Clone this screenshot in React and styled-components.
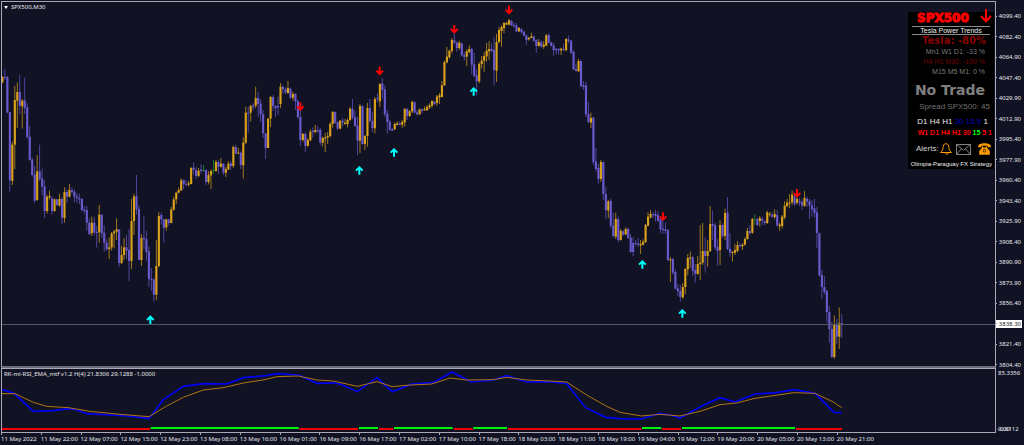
import React from "react";
import styled, { createGlobalStyle } from "styled-components";

const GlobalStyle = createGlobalStyle`
  * { box-sizing: border-box; }
  body { margin: 0; background: #111324; }
`;

const colors = {
  bg: "#111324",
  frame: "#a9a8b4",
  text: "#e6e6ea",
  up: "#daa11b",
  down: "#6a5acd",
  flat: "#1f9a2e",
};

/* Candles: kind (u/d/g), high, body top, body bottom, low; heights are thirds of a pixel from base. */
const SESSIONS = [
  {
    base: 0,
    rows: `u 228 231 247 250,d 207 231 234 240,d 228 231 337 340,d 335 336 541 575,u 425 434 543 555,u 258 300 434 507,
u 247 276 302 384,d 225 276 318 342,u 297 302 319 386,d 233 302 324 342,d 310 322 411 416,d 378 410 480 482,
d 472 479 525 530,d 498 524 602 609,u 465 514 600 603,d 434 514 537 543,d 506 535 560 585,d 540 559 633 654,
u 585 590 633 641,u 572 588 592 598,d 590 595 633 644,u 596 598 633 636,d 596 598 615 618,u 581 597 617 620,
d 590 597 653 672,u 562 576 654 668,d 566 576 590 609,u 552 570 590 592,d 561 571 576 581,d 568 575 590 606,
d 580 590 594 609,d 581 594 598 612,d 594 597 630 634,d 618 629 633 641,d 618 630 668 692`,
  },
  {
    base: 540,
    rows: `d 115 128 162 165,u 110 128 160 168,d 110 128 157 166,d 138 156 159 203,u 75 104 157 188,d 103 104 160 174,
d 137 158 188 215,d 177 188 208 213,u 172 202 207 237,u 156 160 202 212,u 150 154 160 205,u 115 148 155 180,
d 147 148 249 260,u 198 225 249 252,u 174 202 225 240,d 165 202 212 237,d 147 210 243 303,u 56 123 243 267,
u 41 49 123 165,d -15 49 88 104,d 75 87 240 241,u 162 174 240 258,d 107 173 178 207,d 153 177 216 242,
d 199 214 297 321,d 264 297 300 333,d 294 299 344 365,u 180 258 344 360,u 96 108 258 262,d 98 105 118 134,
d 117 118 144 187,u 117 118 142 152,d 116 119 129 137,u 80 88 129 130,u 50 58 89 92,u 35 38 58 73,u 22 30 38 40`,
  },
  {
    base: 0,
    rows: `u 534 541 571 573,d 538 541 552 568,d 540 552 555 557,u 543 550 554 559,u 501 504 552 553,d 487 503 510 524,
d 501 510 528 537,u 504 512 528 531,d 493 509 513 521,g 495 510 513 516,d 508 510 546 555,u 514 525 546 553,
u 508 513 526 567,g 480 510 513 522,u 480 486 513 516,d 481 486 500 522,u 474 491 500 503,d 489 491 518 525,
u 500 507 518 531,u 484 491 508 510,d 484 490 498 510,u 436 441 498 504,d 434 441 460 463,u 444 458 461 462,
d 454 458 495 507,u 412 428 496 536,u 320 338 428 432`,
  },
  {
    base: 180,
    rows: `d 140 158 161 218,u 134 138 158 185,d 130 136 140 150,u 80 114 137 144,d 96 114 132 172,d 117 131 163 186,
d 150 163 220 234,d 219 220 264 297,u 174 176 264 265,u 108 111 176 201,d 105 111 138 152,d 136 138 144 171,
d 110 138 142 165,u 69 80 132 144,d 75 81 88 102,d 82 88 97 102,u 63 84 99 102,d 83 86 113 117,u 95 102 113 122,
d 99 102 124 150,d 119 124 172 175,d 130 171 240 258,u 219 222 240 245,d 216 222 258 276,u 234 240 258 260,
u 208 215 241 244,d 202 212 216 233,u 195 210 216 220,d 198 210 214 219,d 204 210 248 256,u 230 234 248 260,
u 219 232 236 276,u 216 228 232 252,u 186 192 228 234,u 153 156 192 203,d 154 156 188 192,d 184 187 206 210,
u 180 182 206 208,d 174 182 188 200,u 177 188 192 194,u 175 180 192 202,u 141 146 180 183,d 117 147 173 178,
d 152 172 198 200,d 170 197 242 285,u 132 138 242 279,d 136 138 252 254,u 225 228 252 270,u 129 144 228 260,
d 117 144 183 188,d 156 183 204 216,u 111 117 205 220,d 101 114 117 127,u 69 72 124 141,d 54 70 90 116,
d 77 88 162 171,d 150 161 186 220,d 180 185 209 213,d 204 207 212 213,u 187 192 208 210,u 184 190 195 196,
d 184 190 194 195,u 180 186 194 203,u 144 147 187 200,d 144 147 168 180,u 150 154 168 171,u 122 126 154 160,
d 123 127 158 160,d 150 157 163 167,u 146 148 163 165,d 144 149 153 160,u 139 147 151 152,u 135 141 151 152,
u 130 136 142 147,u 120 123 137 143,d 123 125 132 135,u 105 110 129 137,u 99 106 112 132,u 63 76 111 112`,
  },
  {
    base: 0,
    rows: `u 182 186 256 258,u 141 170 187 190,u 149 152 172 176,u 114 120 153 160,d 95 121 128 132,d 123 128 144 155,
u 122 128 144 150,d 128 130 166 169,d 156 165 171 182,u 148 154 170 198,u 136 147 156 160,d 143 147 194 222,
d 158 193 228 231,d 208 226 244 287,u 186 192 244 250,u 168 182 192 206,u 157 168 182 216,u 129 152 169 185,
u 123 147 154 180,d 130 147 153 157,d 110 150 210 254,u 102 126 212 246,u 81 90 126 130,u 76 81 93 140,
u 66 69 84 100,u 66 69 74 75,u 57 61 74 76,d 60 63 76 78,d 68 75 79 82,d 69 77 94 96,u 81 84 94 96,
d 84 88 97 100,d 93 95 107 108,d 102 107 120 135,u 110 114 118 122,u 98 109 114 115,d 106 110 122 126,
d 118 120 138 158,u 117 126 138 140,d 121 127 140 144,u 123 134 140 147,u 102 106 137 138,d 100 105 128 130,
d 124 128 137 140,d 128 137 150 167,d 144 147 151 162,d 144 147 151 164,u 143 146 151 165,d 131 147 151 153,
u 114 117 150 155,d 107 118 123 130,d 120 122 158 162,d 150 156 208 210,d 190 207 213 215,u 177 183 214 216,
d 181 183 258 262,d 243 256 261 270,d 245 256 343 351,d 306 342 366 370,u 338 354 368 384,d 350 353 486 495,
d 444 484 507 515,d 492 504 537 551,u 480 486 537 546`,
  },
  {
    base: 450,
    rows: `d 34 36 132 150,d 111 132 180 208,u 150 154 182 204,d 147 153 227 234,d 189 226 258 262,u 188 207 260 267,
d 200 207 270 278,u 237 243 270 272,d 240 244 254 258,u 232 237 253 256,d 232 237 264 266,d 252 263 306 309,
d 261 279 306 318,d 270 279 282 288,d 264 280 284 292,u 270 282 286 312,u 268 275 284 286,u 222 225 276 279,
u 186 200 227 229,u 180 192 202 206,d 186 192 195 204,d 180 192 198 214,d 183 196 212 216,d 200 208 238 249,
d 190 236 240 252,d 218 238 243 252,d 237 241 330 333,u 321 328 331 396,d 324 327 368 374,d 357 366 416 418,
d 402 415 424 438,d 405 423 441 455,u 399 411 442 446,u 354 357 411 432,u 312 324 358 376,u 304 322 326 354,
d 318 322 362 378,d 342 360 372 398,u 318 342 372 374,u 225 338 342 390,u 219 303 338 345,d 262 303 318 368,
u 270 303 318 350,u 168 222 303 306,d 182 222 228 270,d 219 226 292 300,d 267 291 303 348,u 210 225 300 345,
d 220 225 258 264,u 176 189 258 270,d 141 188 297 300,d 249 297 308 320,u 303 306 309 335,u 282 300 308 315,
u 273 285 303 307,d 278 285 289 292,u 280 284 289 300,u 262 267 284 287,u 234 243 267 269,d 225 243 249 254,
u 204 207 248 252,g 192 207 209 225,d 203 208 225 228,u 198 204 213 230,d 200 207 212 225,d 210 214 219 225,
u 183 187 219 222,u 186 191 194 200,d 186 194 200 204,u 178 192 201 207,d 180 195 226 230,u 218 224 229 243,
u 195 200 228 236,u 154 167 202 208,u 147 158 168 172,u 132 157 160 175,u 121 134 157 165,d 132 140 162 168,
u 140 147 158 164,d 144 154 158 168,d 148 156 166 180,u 123 144 168 170,d 140 146 155 171,d 147 154 166 207,
d 150 166 178 200,d 147 175 189 202,d 171 187 249 294,d 248 250 376 380,d 360 375 411 448,d 377 411 426 434,
d 418 423 486 518,d 468 486 537 578,d 516 537 621 624,u 496 522 621 626,d 507 522 560 582,u 472 520 560 597,
d 492 519 523 564`,
  },
];

const CANDLES = SESSIONS.flatMap(({ base, rows }) =>
  rows.split(",").map((row) => {
    const [kind, ...values] = row.trim().split(" ");
    const [high, top, bottom, low] = values.map((v) => Number(v) + base);
    return { kind, high, top, bottom, low };
  })
);
const CANDLE_STEP = 7.45;
const KIND_COLOR = { u: colors.up, d: colors.down, g: colors.flat };

const SELLS = [[901, 320], [1139, 213], [1363, 88], [1527, 30], [1989, 650], [2391, 580]];
const BUYS = [[451, 959], [1078, 511], [1182, 457], [1421, 274], [1927, 793], [2047, 940]];

const PRICES = [
  "4099.40", "4082.40", "4064.90", "4047.40", "4029.90", "4012.90", "3995.40", "3977.90", "3960.40",
  "3943.40", "3925.90", "3908.40", "3890.90", "3873.90", "3856.40", "3838.30", "3821.40", "3804.40",
];
const CURRENT = "3838.30";

const TIMES = [
  "11 May 2022", "11 May 22:00", "12 May 07:00", "12 May 15:00", "12 May 23:00", "13 May 08:00",
  "13 May 16:00", "16 May 01:00", "16 May 09:00", "16 May 17:00", "17 May 02:00", "17 May 10:00",
  "17 May 18:00", "18 May 03:00", "18 May 11:00", "18 May 19:00", "19 May 04:00", "19 May 12:00",
  "19 May 20:00", "20 May 05:00", "20 May 13:00", "20 May 21:00",
];

const RSI =
  "6,83 42,94 100,148 160,146 205,140 225,142 260,155 330,159 380,162 447,170 490,113 550,73 610,65 680,66 730,47 800,41 830,35 895,39 952,64 1000,63 1020,66 1072,89 1131,47 1177,89 1235,66 1300,62 1356,30 1414,60 1480,54 1520,41 1580,60 1650,59 1700,65 1757,137 1817,166 1860,170 1923,171 1980,154 2010,159 2040,168 2110,130 2160,107 2205,120 2265,96 2330,92 2382,83 2445,94 2502,151 2525,152";
const EMA =
  "6,95 45,95 100,121 140,133 205,137 270,148 360,157 447,164 500,132 550,106 610,84 670,77 730,63 795,53 830,44 895,42 952,54 1000,57 1072,73 1131,59 1177,74 1230,69 1295,66 1350,48 1400,54 1480,53 1520,46 1580,54 1650,57 1700,60 1760,99 1820,133 1860,151 1925,162 1980,157 2040,162 2100,148 2160,128 2210,123 2265,109 2382,92 2445,94 2500,120 2525,137";
const TREND_DOWN = [[6, 450], [898, 1074], [1137, 1180], [1362, 1418], [1524, 1924], [1986, 2043], [2388, 2526]];
const TREND_UP = [[452, 896], [1077, 1134], [1182, 1358], [1420, 1521], [1926, 1984], [2046, 2385]];

const Terminal = styled.main`
  display: grid;
  grid-template-columns: minmax(0, 1fr) 28px;
  grid-template-rows: minmax(0, 1fr) 77px;
  height: 100vh;
  min-height: 300px;
  background: ${colors.bg};
  color: ${colors.text};
  font: 6px/8px "Noto Sans", "Open Sans", sans-serif;
  white-space: nowrap;
  overflow: hidden;
`;

const PriceSection = styled.section`
  position: relative;
  margin: 1px 0 0 1px;
  border: 1px solid ${colors.frame};
  border-bottom: 2px solid #6d6c7a;
  min-height: 0;
`;

const LowerSection = styled.section`
  display: flex;
  flex-direction: column;
  margin-left: 1px;
  min-width: 0;
`;

const IndicatorPane = styled.div`
  position: relative;
  height: 65px;
  border: 1px solid ${colors.frame};
`;

const Plot = styled.svg`
  display: block;
  width: 100%;
  height: 100%;
`;

const PaneTitle = styled.h1`
  position: absolute;
  top: 1px;
  left: 2px;
  display: flex;
  align-items: center;
  gap: 3px;
  margin: 0;
  font: inherit;
`;

const Caret = styled.span`
  border: 2px solid transparent;
  border-top: 3px solid #fff;
  border-bottom: 0;
`;

const PriceAxis = styled.ol`
  display: flex;
  flex-direction: column;
  justify-content: space-between;
  margin: 0 0 -1px;
  padding: 12px 0 0;
  list-style: none;
`;

const PriceTick = styled.li`
  display: flex;
  align-items: center;
  width: 26px;
  padding-right: 1px;
  color: ${(p) => (p.$current ? "#222" : colors.text)};
  background: ${(p) => (p.$current ? "#fff" : "none")};
  &::before {
    content: "";
    width: 1px;
    height: 1px;
    margin-right: 2px;
    background: ${colors.frame};
  }
`;

const IndicatorAxis = styled.div`
  display: flex;
  flex-direction: column;
  justify-content: space-between;
  height: 65px;
  padding: 1px 0 0 2px;
`;

const AxisFloor = styled.div`
  display: grid;
  span { grid-area: 1 / 1; }
`;

const TimeAxis = styled.ol`
  display: flex;
  margin: 0;
  padding: 0;
  list-style: none;
`;

const TimeTick = styled.li`
  flex: 0 0 4%;
  &::before {
    content: "";
    display: block;
    width: 1px;
    height: 2px;
    background: ${colors.frame};
  }
`;

const InfoPanel = styled.aside`
  position: absolute;
  top: 10px;
  right: 1px;
  width: 86px;
  height: 157px;
  background: #000;
  font-family: "Liberation Sans", Arial, sans-serif;
`;

const InfoHeader = styled.header`
  display: flex;
  justify-content: space-between;
  align-items: center;
  height: 12px;
  padding: 0 2px 0 9px;
  color: #f00;
  font: bold 12px/12px "DejaVu Sans", sans-serif;
  -webkit-text-stroke: 1px #f00;
  svg { width: 12px; height: 14px; margin-top: -4px; }
`;

const InfoTitle = styled.h2`
  height: 9px;
  margin: 2px 4px 0;
  border: solid #8c8c8c;
  border-width: 1px 0;
  color: #eee;
  font-size: 7px;
  font-weight: normal;
  line-height: 7px;
  text-align: center;
`;

const InfoRow = styled.div`
  height: ${(p) => p.$height}px;
  margin-top: ${(p) => p.$gap || 0}px;
  padding-right: ${(p) => p.$end}px;
  color: ${(p) => p.$color};
  font-size: ${(p) => p.$size}px;
  font-weight: ${(p) => (p.$bold ? "bold" : "normal")};
  font-family: ${(p) => (p.$wide ? '"DejaVu Sans", sans-serif' : "inherit")};
  line-height: ${(p) => p.$height}px;
  text-align: right;
`;

const Tone = styled.span`
  color: ${(p) => p.$color};
`;

const Alerts = styled.div`
  display: grid;
  grid-template-columns: 24px 16px 22px 13px;
  align-items: center;
  height: 22px;
  padding-left: 8px;
  color: #d4d4d4;
  font-size: 8px;
`;

const AlertButton = styled.button`
  display: block;
  padding: 0;
  border: 0;
  background: none;
  svg { display: block; }
`;

function SignalArrow({ x, y, down }) {
  return (
    <path
      d="M0 13V-11M-10 1L0 -9L10 1"
      transform={`translate(${x} ${y})${down ? " scale(1 -1)" : ""}`}
      stroke={down ? "#ff0000" : "#00ffff"}
      strokeWidth="6"
      fill="none"
    />
  );
}

function PriceChart() {
  return (
    <Plot viewBox="6 6 2979 1092" preserveAspectRatio="none" role="img" aria-label="SPX500 candles">
      {CANDLES.map((c, i) => {
        const x = 7 + i * CANDLE_STEP;
        const fill = KIND_COLOR[c.kind];
        return (
          <g key={i} fill={fill}>
            <rect x={x - 1.3} y={c.high} width="2.8" height={c.low - c.high} opacity="0.75" />
            <rect x={x - 3} y={c.top} width="6.4" height={c.bottom - c.top} />
          </g>
        );
      })}
      <rect x="6" y="972" width="2979" height="3" fill="#4b5866" />
      {SELLS.map(([x, y]) => <SignalArrow key={x} x={x} y={y} down />)}
      {BUYS.map(([x, y]) => <SignalArrow key={x} x={x} y={y} />)}
    </Plot>
  );
}

function IndicatorChart() {
  return (
    <Plot viewBox="6 21 2979 189" preserveAspectRatio="none" role="img" aria-label="RSI and EMA">
      <polyline points={RSI} fill="none" stroke="#0000f5" strokeWidth="5" />
      <polyline points={EMA} fill="none" stroke="#b07516" strokeWidth="3" />
      {TREND_DOWN.map(([a, b]) => <rect key={a} x={a} y="198" width={b - a} height="6" fill="#f00000" />)}
      {TREND_UP.map(([a, b]) => <rect key={a} x={a} y="195" width={b - a} height="6" fill="#00f010" />)}
    </Plot>
  );
}

function BellIcon() {
  return (
    <svg width="12" height="12" viewBox="0 0 12 12" fill="none" stroke="#ff9a00">
      <path d="M6 .7C3.6 .8 3.2 2.6 3.1 4.6C3 6.8 2.2 7.8 .5 9.5H11.5C9.8 7.8 9 6.8 8.9 4.6C8.8 2.6 8.4 .8 6 .7Z" />
      <path d="M5.4 9.8C5.5 11.8 8.2 11.8 8.4 9.8" />
    </svg>
  );
}

function MailIcon() {
  return (
    <svg width="15" height="11" viewBox="0 0 15 11" fill="none" stroke="#8f8f8f" strokeWidth=".9">
      <path d="M.5 .5H14.5V10.5H.5ZM.5 .5L7.5 6.3L14.5 .5M.5 10.5L5.4 4.8M14.5 10.5L9.6 4.8" />
    </svg>
  );
}

function PhoneIcon() {
  return (
    <svg width="13" height="12" viewBox="0 0 13 12" fill="#ff9a00">
      <path d="M.2 4.2C-.2 1.3 2.5 .3 6.5 .3S13.2 1.3 12.8 4.2H9.6V2.8H3.4V4.2Z" />
      <path d="M4 3.6H5.2V4.4H7.8V3.6H9V4.8L11.8 8V11.7H1.2V8L4 4.8Z" />
      <circle cx="6.5" cy="7.7" r="1.7" fill="#3a2300" />
      <circle cx="6.5" cy="7.7" r="1" />
    </svg>
  );
}

function TrendPanel() {
  return (
    <InfoPanel>
      <InfoHeader>
        SPX500
        <svg viewBox="0 0 12 14" fill="none" stroke="#f00" strokeWidth="2">
          <path d="M6 0V12M1 7L6 12.2L11 7" />
        </svg>
      </InfoHeader>
      <InfoTitle>Tesla Power Trends</InfoTitle>
      <InfoRow $height={12} $size={10} $end={8} $color="#860000" $bold $wide>Tesla: -80%</InfoRow>
      <InfoRow $height={10} $size={7} $end={9} $color="#7a7a7a">Mn1 W1 D1: -33 %</InfoRow>
      <InfoRow $height={10} $size={7} $end={9} $color="#740000">H4 H1 M30: -100 %</InfoRow>
      <InfoRow $height={10} $size={7} $end={9} $color="#7a7a7a">M15 M5 M1: 0 %</InfoRow>
      <InfoRow $height={26} $size={14} $end={9} $color="#808080" $bold $wide>No Trade</InfoRow>
      <InfoRow $height={8} $size={8} $end={4} $color="#707070">Spread SPX500: 45</InfoRow>
      <InfoRow $height={11} $gap={5} $size={8} $end={6} $color="#e8e8e8">
        D1 H4 H1 <Tone $color="#0000c8">30 15 5</Tone> 1
      </InfoRow>
      <InfoRow $height={11} $size={7} $end={2} $color="#f00" $bold>
        W1 D1 H4 H1 30 <Tone $color="#0f0">15</Tone> 5 1
      </InfoRow>
      <Alerts>
        Alerts:
        <AlertButton aria-label="Sound alert"><BellIcon /></AlertButton>
        <AlertButton aria-label="Mail alert"><MailIcon /></AlertButton>
        <AlertButton aria-label="Phone alert"><PhoneIcon /></AlertButton>
      </Alerts>
      <InfoRow $height={8} $size={6} $end={2} $color="#f0f0f0">Olimpia-Paraguay FX Strategy</InfoRow>
    </InfoPanel>
  );
}

export default function App() {
  return (
    <>
      <GlobalStyle />
      <Terminal>
        <PriceSection>
          <PriceChart />
          <PaneTitle><Caret />SPX500,M30</PaneTitle>
          <TrendPanel />
        </PriceSection>
        <PriceAxis>
          {PRICES.map((price) => (
            <PriceTick key={price} $current={price === CURRENT}>{price}</PriceTick>
          ))}
        </PriceAxis>
        <LowerSection>
          <IndicatorPane>
            <IndicatorChart />
            <PaneTitle as="h2">RK-ml-RSI_EMA_mtf v1.2 H(4) 21.8306 29.1288 -1.0000</PaneTitle>
          </IndicatorPane>
          <TimeAxis>
            {TIMES.map((time) => <TimeTick key={time}>{time}</TimeTick>)}
          </TimeAxis>
        </LowerSection>
        <IndicatorAxis>
          <span>85.3356</span>
          <AxisFloor><span>-0.6112</span><span>0.00</span></AxisFloor>
        </IndicatorAxis>
      </Terminal>
    </>
  );
}
